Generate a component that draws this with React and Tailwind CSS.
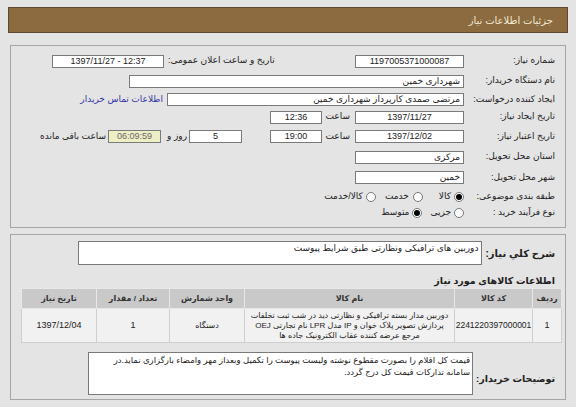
import React from 'react';

const Field = ({ w, align = 'center', className = '', children }) => (
  <div
    dir={align === 'center' ? 'ltr' : 'rtl'}
    className={`h-[13px] bg-white border border-[#7a7a7a] leading-[11px] text-[9px] px-[3px] whitespace-nowrap overflow-hidden shrink-0 ${
      align === 'center' ? 'text-center' : 'text-right'
    } ${className}`}
    style={{ width: w }}
  >
    {children}
  </div>
);

const Label = ({ children, w = 91 }) => (
  <div className="shrink-0 whitespace-nowrap text-[9px] text-[#222]" style={{ width: w }}>
    {children}
  </div>
);

const Radio = ({ checked }) => (
  <span className="w-[10px] h-[10px] rounded-full border border-[#777] bg-white flex items-center justify-center shrink-0">
    {checked && <span className="w-[6px] h-[6px] rounded-full bg-black" />}
  </span>
);

const App = () => {
  return (
    <div
      dir="rtl"
      className="w-[576px] h-[407px] bg-[#e4e4e4] overflow-hidden pt-[7px] text-[#222]"
      style={{ fontFamily: '"Liberation Sans", "DejaVu Sans", sans-serif' }}
    >
      {/* header bar */}
      <div className="mx-[8px] h-[26px] bg-[#8b6b3f] border border-[#5c4a30] flex items-center pr-[14px] text-[10px] text-[#f3ead6]">
        جزئیات اطلاعات نیاز
      </div>

      {/* main info box */}
      <div className="mx-[10px] mt-[12px] h-[183px] border border-[#a5a5a5] pr-[10px] pt-[5px]">
        <div className="h-[20px] flex items-center pl-[41px]">
          <Label>شماره نیاز:</Label>
          <Field w={109}>1197005371000087</Field>
          <div className="flex-1" />
          <div className="whitespace-nowrap text-[9px]">تاریخ و ساعت اعلان عمومی:</div>
          <Field w={112} className="mr-[4px]">1397/11/27 - 12:37</Field>
        </div>

        <div className="h-[20px] flex items-center">
          <Label>نام دستگاه خریدار:</Label>
          <Field w={335} align="right">شهرداری خمین</Field>
        </div>

        <div className="h-[17px] flex items-center">
          <Label>ایجاد کننده درخواست:</Label>
          <Field w={297} align="right">مرتضی صمدی کارپرداز شهرداری خمین</Field>
          <a className="mr-[4px] text-[9px] text-[#3434a8] whitespace-nowrap">اطلاعات تماس خریدار</a>
        </div>

        <div className="h-[18px] flex items-center">
          <Label>تاریخ ایجاد نیاز:</Label>
          <Field w={109}>1397/11/27</Field>
          <div className="w-[22px] shrink-0 mr-[5px] text-[9px] whitespace-nowrap">ساعت</div>
          <Field w={52} className="mr-[6px]">12:36</Field>
        </div>

        <div className="h-[21px] flex items-center">
          <Label>تاریخ اعتبار نیاز:</Label>
          <Field w={109}>1397/12/02</Field>
          <div className="w-[22px] shrink-0 mr-[5px] text-[9px] whitespace-nowrap">ساعت</div>
          <Field w={52} className="mr-[6px]">19:00</Field>
          <Field w={53} className="mr-[28px]">5</Field>
          <div className="mr-[2px] text-[9px] whitespace-nowrap">روز و</div>
          <Field w={53} className="mr-[6px] !bg-[#efefc6] text-[#666]">06:09:59</Field>
          <div className="mr-[2px] text-[9px] whitespace-nowrap">ساعت باقی مانده</div>
        </div>

        <div className="h-[20px] flex items-center">
          <Label>استان محل تحویل:</Label>
          <Field w={109} align="right">مرکزی</Field>
        </div>

        <div className="h-[21px] flex items-center">
          <Label>شهر محل تحویل:</Label>
          <Field w={109} align="right">خمین</Field>
        </div>

        <div className="h-[18px] flex items-center text-[9px]">
          <Label>طبقه بندی موضوعی:</Label>
          <Radio checked />
          <span className="mr-[3px]">کالا</span>
          <span className="mr-[16px]"><Radio /></span>
          <span className="mr-[4px]">خدمت</span>
          <span className="mr-[9px]"><Radio /></span>
          <span className="mr-[3px]">کالا/خدمت</span>
        </div>

        <div className="h-[14px] flex items-center text-[9px]">
          <Label>نوع فرآیند خرید :</Label>
          <Radio />
          <span className="mr-[3px]">جزیی</span>
          <span className="mr-[8px]"><Radio checked /></span>
          <span className="mr-[3px]">متوسط</span>
        </div>
      </div>

      {/* description + goods box */}
      <div className="mx-[10px] mt-[6px] h-[166px] border border-[#a5a5a5] pr-[10px] pt-[6px]">
        <div className="flex items-center pl-[67px]">
          <div className="shrink-0 whitespace-nowrap text-[10px] font-bold ml-[3px]">شرح کلي نياز:</div>
          <div className="flex-1 h-[24px] bg-white border border-[#7a7a7a] text-[9px] px-[3px] leading-[13px] text-right">
            دوربین های ترافیکی ونظارتی طبق شرایط پیوست
          </div>
        </div>

        <div className="mt-[8px] h-[15px] text-[9.5px] font-bold leading-[15px] whitespace-nowrap">
          اطلاعات کالاهای مورد نیاز
        </div>

        <div className="ml-[11px] -mr-[7px]">
          <table className="w-[540px] table-fixed border-collapse text-[8px]">
            <colgroup>
              <col style={{ width: 29 }} />
              <col style={{ width: 78 }} />
              <col style={{ width: 210 }} />
              <col style={{ width: 75 }} />
              <col style={{ width: 73 }} />
              <col style={{ width: 75 }} />
            </colgroup>
            <thead>
              <tr className="h-[20px] bg-[#c9c9c9] font-bold text-[#333]">
                <th className="border border-[#e8e8e8]">ردیف</th>
                <th className="border border-[#e8e8e8]">کد کالا</th>
                <th className="border border-[#e8e8e8]">نام کالا</th>
                <th className="border border-[#e8e8e8]">واحد شمارش</th>
                <th className="border border-[#e8e8e8]">تعداد / مقدار</th>
                <th className="border border-[#e8e8e8]">تاریخ نیاز</th>
              </tr>
            </thead>
            <tbody>
              <tr className="h-[34px] bg-[#f1f1f1] text-center text-[#222] text-[9px]">
                <td className="border border-[#cfcfcf]">1</td>
                <td className="border border-[#cfcfcf] text-[8.5px]">2241220397000001</td>
                <td className="border border-[#cfcfcf] leading-[10px] px-[2px] text-[8px]">
                  دوربین مدار بسته ترافیکی و نظارتی دید در شب ثبت تخلفات پردازش تصویر پلاک خوان و IP مدل LPR نام تجارتی OEJ مرجع عرضه کننده عقاب الکترونیک جاده ها
                </td>
                <td className="border border-[#cfcfcf] text-[8px]">دستگاه</td>
                <td className="border border-[#cfcfcf]">1</td>
                <td className="border border-[#cfcfcf]">1397/12/04</td>
              </tr>
            </tbody>
          </table>
        </div>

        <div className="mt-[9px] flex items-start pl-[77px]">
          <div className="shrink-0 mt-[20px] whitespace-nowrap text-[9.5px] font-bold ml-[3px]">توضیحات خریدار:</div>
          <div className="flex-1 h-[43px] bg-white border border-[#7a7a7a] text-[8.5px] leading-[12px] px-[2px] pt-[1px] text-right">
            قیمت کل اقلام را بصورت مقطوع نوشته ولیست پیوست را تکمیل وبعداز مهر وامضاء بارگزاری نماید.در سامانه تدارکات قیمت کل درج گردد.
          </div>
        </div>
      </div>
    </div>
  );
};

export default App;
